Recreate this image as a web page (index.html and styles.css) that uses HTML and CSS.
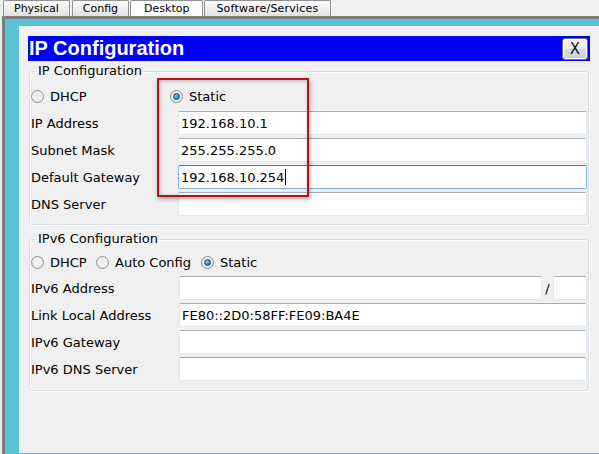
FILE: index.html
```html
<!DOCTYPE html>
<html>
<head>
<meta charset="utf-8">
<link rel="stylesheet" href="styles.css">
</head>
<body>
<div class="tabs">
  <div class="tab">Physical</div>
  <div class="tab">Config</div>
  <div class="tab active">Desktop</div>
  <div class="tab wide">Software/Services</div>
</div>
<div class="frame">
  <div class="panel">
    <div class="titlebar">
      <span class="title">IP Configuration</span>
      <div class="close">X</div>
    </div>

    <fieldset class="group g4">
      <legend>IP Configuration</legend>
      <div class="radios v4">
        <div class="opt"><span class="radio"></span>DHCP</div>
        <div class="opt"><span class="radio on"></span>Static</div>
      </div>
      <div class="form f4">
        <div class="lbl">IP Address</div>
        <div class="field">192.168.10.1</div>
        <div class="lbl">Subnet Mask</div>
        <div class="field">255.255.255.0</div>
        <div class="lbl">Default Gateway</div>
        <div class="field focus">192.168.10.254<span class="caret"></span></div>
        <div class="lbl">DNS Server</div>
        <div class="field"></div>
      </div>
    </fieldset>

    <fieldset class="group g6">
      <legend>IPv6 Configuration</legend>
      <div class="radios v6">
        <div class="opt"><span class="radio"></span>DHCP</div>
        <div class="opt"><span class="radio"></span>Auto Config</div>
        <div class="opt"><span class="radio on"></span>Static</div>
      </div>
      <div class="form f6">
        <div class="lbl">IPv6 Address</div>
        <div class="addr6">
          <div class="field"></div>
          <span class="slash">/</span>
          <div class="field prefix"></div>
        </div>
        <div class="lbl">Link Local Address</div>
        <div class="field">FE80::2D0:58FF:FE09:BA4E</div>
        <div class="lbl">IPv6 Gateway</div>
        <div class="field"></div>
        <div class="lbl">IPv6 DNS Server</div>
        <div class="field"></div>
      </div>
    </fieldset>

    <div class="highlight"></div>
  </div>
</div>
</body>
</html>
```

FILE: styles.css
```css
html, body {
  margin: 0;
  padding: 0;
}
body {
  width: 599px;
  height: 454px;
  overflow: hidden;
  background: #ececec;
  font-family: "DejaVu Sans", sans-serif;
  color: #000;
}

/* tabs */
.tabs {
  display: flex;
  gap: 2px;
  height: 16px;
  padding-left: 3px;
  background: #f0f0f0;
}
.tab {
  box-sizing: border-box;
  height: 16px;
  padding: 0 10px;
  border: 1px solid #929292;
  border-bottom: none;
  border-radius: 2px 2px 0 0;
  background: linear-gradient(#fbfbfb, #e2e2e2);
  font-size: 11px;
  line-height: 15px;
  white-space: nowrap;
}
.tab.active {
  margin: 0 -1px;
  padding: 0 13px;
  background: #fcfcfc;
}
.tab.wide {
  padding: 0 12px 0 11px;
  letter-spacing: 0.2px;
}

/* desktop frame */
.frame {
  margin-left: 2px;
  border-top: 3px solid #7d7d7d;
  border-left: 3px solid #7d7d7d;
  background: #5bc1d6;
  padding: 7px 0 0 14px;
  height: 440px;
}
.panel {
  position: relative;
  box-sizing: border-box;
  height: 427px;
  background: #f0f0f0;
  padding: 10px 9px 0 9px;
}

/* title bar */
.titlebar {
  display: flex;
  justify-content: space-between;
  align-items: center;
  height: 25px;
  padding: 0 2px 0 1px;
  background: #0000ff;
}
.title {
  color: #fff;
  font: bold 20px/25px "Liberation Sans", sans-serif;
}
.close {
  display: flex;
  align-items: center;
  justify-content: center;
  box-sizing: border-box;
  width: 26px;
  height: 22px;
  border: 1px solid #707070;
  border-radius: 3px;
  background: linear-gradient(#f4f4f4 0%, #ececec 48%, #dddddd 52%, #d0d0d0 100%);
  box-shadow: inset 0 0 0 1px #fcfcfc;
  font: 15px "DejaVu Sans", sans-serif;
  color: #111;
}

/* groups */
.group {
  margin: 3px 1px 0;
  padding: 0 1px 8px 1px;
  border: 1px solid #d5dfe5;
  border-radius: 3px;
  box-shadow: inset 1px 1px 0 #fff, 1px 1px 0 #fff;
  min-width: 0;
}
.g6 {
  margin-top: 7px;
  padding-bottom: 9px;
}
legend {
  margin-left: 5px;
  padding: 0 2px;
  font-size: 13px;
  line-height: 14px;
}

.radios {
  display: grid;
  height: 24px;
  align-items: center;
  margin: 6px 0 3px;
}
.radios.v4 { grid-template-columns: 139px auto; }
.radios.v6 {
  grid-template-columns: 65px 105px auto;
  margin: 4px 0 2px;
}
.opt {
  display: flex;
  align-items: center;
  gap: 6px;
  font-size: 13px;
  white-space: nowrap;
}
.radio {
  display: flex;
  align-items: center;
  justify-content: center;
  box-sizing: border-box;
  width: 13px;
  height: 13px;
  border: 1px solid #8e8f8f;
  border-radius: 50%;
  background: radial-gradient(circle at 50% 45%, #e6e6e6 0%, #f4f4f4 45%, #d2d2d2 100%);
}
.radio.on::after {
  content: "";
  width: 5px;
  height: 5px;
  border-radius: 50%;
  border: 1px solid #1c4a6e;
  background: radial-gradient(circle at 40% 35%, #9ad6f6 0%, #2c84c6 55%, #16507e 100%);
}

.form {
  display: grid;
  grid-auto-rows: 24px;
  row-gap: 3px;
  align-items: center;
  font-size: 13px;
}
.f4 { grid-template-columns: 147px 1fr; }
.f6 { grid-template-columns: 148px 1fr; }
.lbl {
  white-space: nowrap;
}
.field {
  display: flex;
  align-items: center;
  box-sizing: border-box;
  height: 24px;
  padding: 0 2px;
  border: 1px solid #e2e8ee;
  border-top-color: #abadb3;
  border-radius: 2px;
  background: #fff;
  font-size: 13px;
  white-space: nowrap;
  overflow: hidden;
}
.field.focus {
  border-color: #7eb4ea;
  border-top-color: #3d7bad;
}
.caret {
  display: inline-block;
  width: 1px;
  height: 16px;
  margin-left: 1px;
  background: #000;
}
.addr6 {
  display: flex;
  align-items: center;
  height: 24px;
}
.addr6 .field { flex: 1; }
.addr6 .field.prefix {
  flex: none;
  width: 34px;
}
.slash {
  width: 11px;
  text-align: center;
  font-size: 13px;
}

/* annotation overlay */
.highlight {
  position: absolute;
  left: 138px;
  top: 52px;
  width: 152px;
  height: 119px;
  box-sizing: border-box;
  border: 2px solid #b3151f;
  box-shadow: 1px 2px 4px rgba(0, 0, 0, 0.35), inset 1px 1px 4px rgba(0, 0, 0, 0.25);
}
```
